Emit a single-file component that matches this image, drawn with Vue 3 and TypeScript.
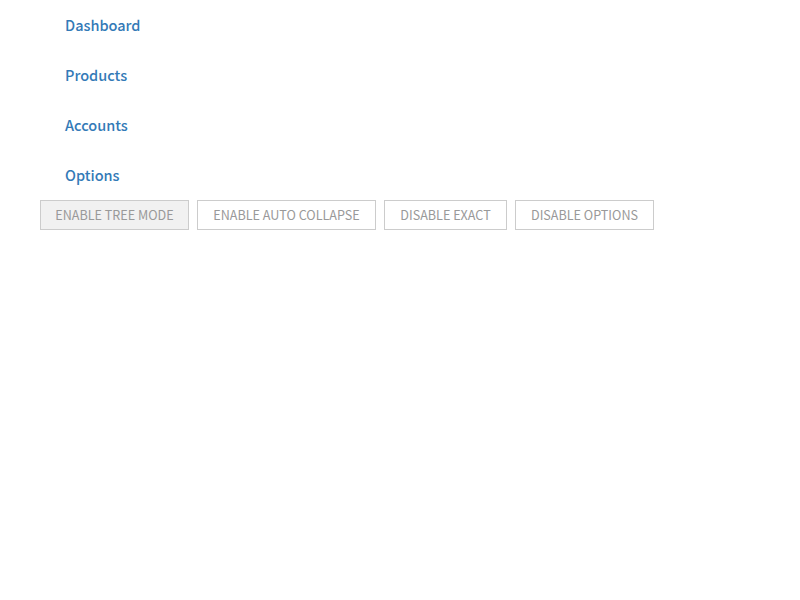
<script setup lang="ts">
import { ref } from 'vue'

const links: string[] = ['Dashboard', 'Products', 'Accounts', 'Options']
const active = ref<string>('Enable tree mode')
const actions: { label: string; width: number }[] = [
  { label: 'Enable tree mode', width: 149 },
  { label: 'Enable auto collapse', width: 179 },
  { label: 'Disable exact', width: 123 },
  { label: 'Disable options', width: 139 },
]
</script>

<template>
  <main class="page">
    <nav class="menu">
      <a v-for="link in links" :key="link" class="link">{{ link }}</a>
    </nav>
    <div class="actions">
      <button
        v-for="action in actions"
        :key="action.label"
        type="button"
        class="action"
        :class="{ active: action.label === active }"
        :style="{ width: action.width + 'px' }"
        @click="active = action.label"
      >{{ action.label }}</button>
    </div>
  </main>
</template>

<style>
body {
  background: #fff;
}
</style>

<style scoped>
.page {
  font-family: "Noto Sans CJK SC", sans-serif;
  padding-left: 40px;
}
.menu {
  display: flex;
  flex-direction: column;
}
.link {
  height: 50px;
  line-height: 50px;
  padding-left: 25px;
  font-size: 14.5px;
  font-weight: 500;
  color: #337ab7;
  cursor: pointer;
}
.actions {
  display: flex;
  gap: 8px;
}
.action {
  box-sizing: border-box;
  height: 30px;
  padding: 0;
  border: 1px solid #ccc;
  border-radius: 0;
  background: #fff;
  color: #999;
  font-family: inherit;
  font-size: 12.6px;
  line-height: 28px;
  font-weight: 400;
  text-transform: uppercase;
  white-space: nowrap;
}
.action.active {
  background: #f1f1f1;
}
</style>
